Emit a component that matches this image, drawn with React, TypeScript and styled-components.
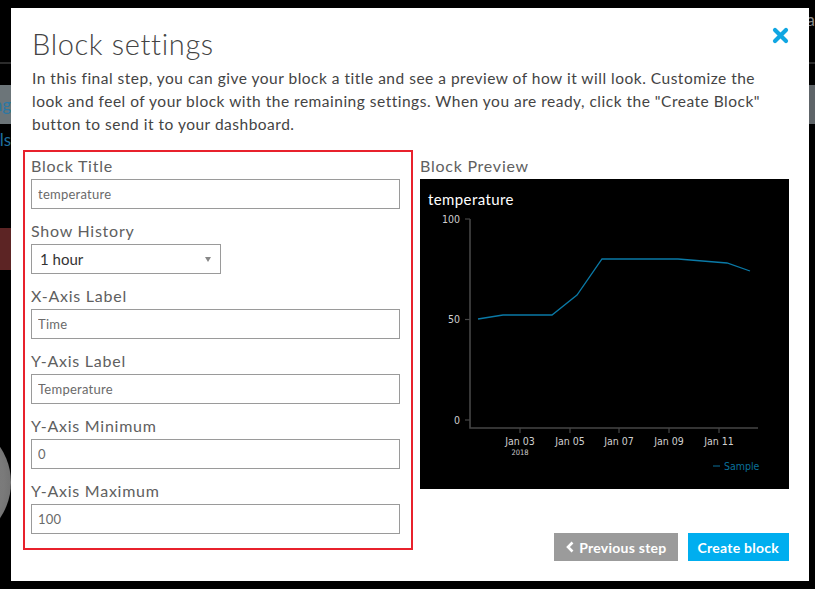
import React from "react";
import styled, { createGlobalStyle } from "styled-components";

const GlobalStyle = createGlobalStyle`
  html, body { margin: 0; padding: 0; background: #000; }
  body { font-family: Lato, "Open Sans", "Liberation Sans", sans-serif; }
  * { box-sizing: border-box; }
`;

const Page = styled.div`
  width: 815px;
  height: 589px;
  background: #000;
  display: grid;
  grid-template-columns: 11px 798px 6px;
  overflow: hidden;
`;

const Strip = styled.div`
  display: flex;
  flex-direction: column;
  overflow: hidden;
`;

const StripLine = styled.div<{ $mt: number }>`
  margin-top: ${(p) => p.$mt}px;
  height: 2px;
  background: #2b2b2b;
  flex: none;
`;

const StripBlock = styled.div<{ $mt: number; $h: number; $bg: string }>`
  margin-top: ${(p) => p.$mt}px;
  height: ${(p) => p.$h}px;
  background: ${(p) => p.$bg};
  flex: none;
  display: flex;
  align-items: center;
  justify-content: flex-end;
  overflow: hidden;
`;

const StripText = styled.span<{ $color: string }>`
  color: ${(p) => p.$color};
  font-size: 17px;
  line-height: 20px;
  white-space: nowrap;
`;

const StripCircle = styled.div`
  margin-top: 149px;
  height: 127px;
  flex: none;
  display: flex;
  justify-content: flex-end;
  overflow: hidden;
  &::before {
    content: "";
    flex: none;
    width: 127px;
    height: 127px;
    border-radius: 50%;
    background: radial-gradient(circle at 40% 50%, #8a8a8a 0%, #7a7a7a 70%, #5a5a5a 100%);
  }
`;

const Modal = styled.div`
  margin-top: 8px;
  height: 573px;
  background: #fff;
  padding: 0 20px 0 12px;
  display: flex;
  flex-direction: column;
`;

const Header = styled.div`
  padding: 0 0 0 9px;
  display: flex;
  flex-direction: column;
`;

const TitleRow = styled.div`
  display: flex;
  align-items: flex-start;
  justify-content: space-between;
  padding-top: 19px;
`;

const Title = styled.h1`
  margin: 0;
  font-size: 29px;
  line-height: 34px;
  font-weight: 300;
  color: #444;
  letter-spacing: 0.65px;
`;

const CloseButton = styled.button`
  border: 0;
  background: transparent;
  padding: 0;
  margin: 0;
  width: 17px;
  height: 17px;
  display: flex;
  cursor: pointer;
`;

const Intro = styled.p`
  margin: 6px 0 0;
  font-size: 15.5px;
  line-height: 23px;
  color: #444;
  letter-spacing: 0.5px;
  width: 745px;
`;

const Body = styled.div`
  margin-top: 14px;
  display: grid;
  grid-template-columns: 390px 1fr;
  column-gap: 7px;
  align-items: start;
`;

const FormBox = styled.div`
  border: 2px solid #e8212c;
  padding: 4px 11px 14px 6px;
  display: flex;
  flex-direction: column;
  gap: 12px;
`;

const Field = styled.div`
  display: flex;
  flex-direction: column;
  gap: 3px;
`;

const Label = styled.label`
  display: block;
  font-size: 16px;
  line-height: 20px;
  color: #606060;
  font-weight: 400;
  letter-spacing: 0.75px;
`;

const TextInput = styled.input`
  height: 30px;
  width: 100%;
  border: 1px solid #9a9a9a;
  border-radius: 0;
  padding: 0 6px;
  font-family: inherit;
  font-size: 13px;
  letter-spacing: 0.25px;
  color: #6a6a6a;
  background: #fff;
  outline: none;
`;

const SelectBox = styled.div`
  width: 190px;
  height: 30px;
  border: 1px solid #9a9a9a;
  display: flex;
  align-items: center;
  padding: 0 8px;
  font-size: 15px;
  color: #333;
`;

const SelectArrow = styled.span`
  margin-left: auto;
  width: 0;
  height: 0;
  border-left: 3.5px solid transparent;
  border-right: 3.5px solid transparent;
  border-top: 5px solid #888;
  margin-right: 1px;
`;

const PreviewCol = styled.div`
  display: flex;
  flex-direction: column;
  padding-top: 6px;
`;

const ChartCard = styled.div`
  margin-top: 3px;
  background: #000;
  height: 310px;
  display: flex;
  flex-direction: column;
`;

const ChartTitle = styled.div`
  padding: 10px 8px 0;
  font-size: 15px;
  line-height: 20px;
  color: #fff;
  letter-spacing: 0.4px;
`;

const ChartSvg = styled.svg`
  display: block;
  flex: none;
`;

const Actions = styled.div`
  margin-top: 44px;
  display: flex;
  justify-content: flex-end;
  gap: 10px;
`;

const Button = styled.button<{ $variant: "gray" | "blue" }>`
  height: 28px;
  border: 0;
  border-radius: 0;
  padding: ${(p) => (p.$variant === "gray" ? "0 11px 0 12px" : "0 10px")};
  background: ${(p) => (p.$variant === "gray" ? "#9b9b9b" : "#00aeef")};
  color: #fff;
  font-family: inherit;
  font-size: 14px;
  font-weight: 700;
  letter-spacing: 0.25px;
  display: flex;
  align-items: center;
  gap: 5px;
  cursor: pointer;
`;

const tickStyle = {
  fill: "#cfcfcf",
  fontSize: 10.5,
  fontFamily: "'DejaVu Sans Condensed', 'Liberation Sans Narrow', sans-serif",
};

const data = [
  [58, 110],
  [83, 106],
  [132, 106],
  [157, 86],
  [182, 50],
  [258, 50],
  [307, 54],
  [330, 62],
];

function Chart() {
  const xTicks = [
    { x: 100, l: "Jan 03" },
    { x: 150, l: "Jan 05" },
    { x: 199, l: "Jan 07" },
    { x: 249, l: "Jan 09" },
    { x: 299, l: "Jan 11" },
  ];
  const yTicks = [
    { y: 10, l: "100" },
    { y: 110.5, l: "50" },
    { y: 211, l: "0" },
  ];
  return (
    <ChartSvg width={369} height={280} viewBox="0 0 369 280">
      <path d="M50 10 V219 H338" fill="none" stroke="#454545" strokeWidth={1.6} />
      {yTicks.map((t) => (
        <g key={t.l}>
          <line x1={45} x2={50} y1={t.y} y2={t.y} stroke="#454545" strokeWidth={1.2} />
          <text x={40} y={t.y + 3.5} textAnchor="end" style={tickStyle}>
            {t.l}
          </text>
        </g>
      ))}
      {xTicks.map((t) => (
        <g key={t.l}>
          <line x1={t.x} x2={t.x} y1={219} y2={224} stroke="#454545" strokeWidth={1.2} />
          <text x={t.x} y={236} textAnchor="middle" style={tickStyle}>
            {t.l}
          </text>
        </g>
      ))}
      <text x={100} y={246} textAnchor="middle" style={{ ...tickStyle, fontSize: 7.5 }}>
        2018
      </text>
      <polyline
        points={data.map((d) => d.join(",")).join(" ")}
        fill="none"
        stroke="#0a79a6"
        strokeWidth={1.3}
      />
      <line x1={293} x2={300} y1={257} y2={257} stroke="#0a6f99" strokeWidth={1} />
      <text x={304} y={261} style={{ ...tickStyle, fill: "#0a6f99", fontSize: 10.5 }}>
        Sample
      </text>
    </ChartSvg>
  );
}

function CloseIcon() {
  return (
    <svg width="17" height="17" viewBox="0 0 17 17">
      <path
        d="M3 3 L14 14 M14 3 L3 14"
        stroke="#10a6e2"
        strokeWidth={4.2}
        strokeLinecap="round"
        fill="none"
      />
    </svg>
  );
}

function ChevronLeft() {
  return (
    <svg width="8" height="12" viewBox="0 0 8 12">
      <path d="M6.5 1.5 L2 6 L6.5 10.5" stroke="#fff" strokeWidth={2.6} fill="none" />
    </svg>
  );
}

export default function App() {
  const fields: { label: string; value: string }[] = [
    { label: "X-Axis Label", value: "Time" },
    { label: "Y-Axis Label", value: "Temperature" },
    { label: "Y-Axis Minimum", value: "0" },
    { label: "Y-Axis Maximum", value: "100" },
  ];
  return (
    <>
      <GlobalStyle />
      <Page>
        <Strip>
          <StripLine $mt={62} />
          <StripBlock $mt={21} $h={39} $bg="#6c7579">
            <StripText $color="#2b78a4">ng</StripText>
          </StripBlock>
          <StripBlock $mt={6} $h={20} $bg="transparent">
            <StripText $color="#1f6f9e">ls</StripText>
          </StripBlock>
          <StripBlock $mt={78} $h={42} $bg="#5c2424" />
          <StripCircle />
        </Strip>
        <Modal>
          <Header>
            <TitleRow>
              <Title>Block settings</Title>
              <CloseButton aria-label="Close">
                <CloseIcon />
              </CloseButton>
            </TitleRow>
            <Intro>
              In this final step, you can give your block a title and see a preview of how it will look. Customize the
              look and feel of your block with the remaining settings. When you are ready, click the "Create Block"
              button to send it to your dashboard.
            </Intro>
          </Header>
          <Body>
            <FormBox>
              <Field>
                <Label>Block Title</Label>
                <TextInput defaultValue="temperature" />
              </Field>
              <Field>
                <Label>Show History</Label>
                <SelectBox>
                  1 hour
                  <SelectArrow />
                </SelectBox>
              </Field>
              {fields.map((f) => (
                <Field key={f.label}>
                  <Label>{f.label}</Label>
                  <TextInput defaultValue={f.value} />
                </Field>
              ))}
            </FormBox>
            <PreviewCol>
              <Label>Block Preview</Label>
              <ChartCard>
                <ChartTitle>temperature</ChartTitle>
                <Chart />
              </ChartCard>
              <Actions>
                <Button $variant="gray">
                  <ChevronLeft />
                  Previous step
                </Button>
                <Button $variant="blue">Create block</Button>
              </Actions>
            </PreviewCol>
          </Body>
        </Modal>
        <Strip>
          <StripBlock $mt={10} $h={20} $bg="transparent">
            <StripText $color="#8a8a8a">va</StripText>
          </StripBlock>
          <StripLine $mt={32} />
          <StripBlock $mt={21} $h={39} $bg="#5e6468" />
        </Strip>
      </Page>
    </>
  );
}
